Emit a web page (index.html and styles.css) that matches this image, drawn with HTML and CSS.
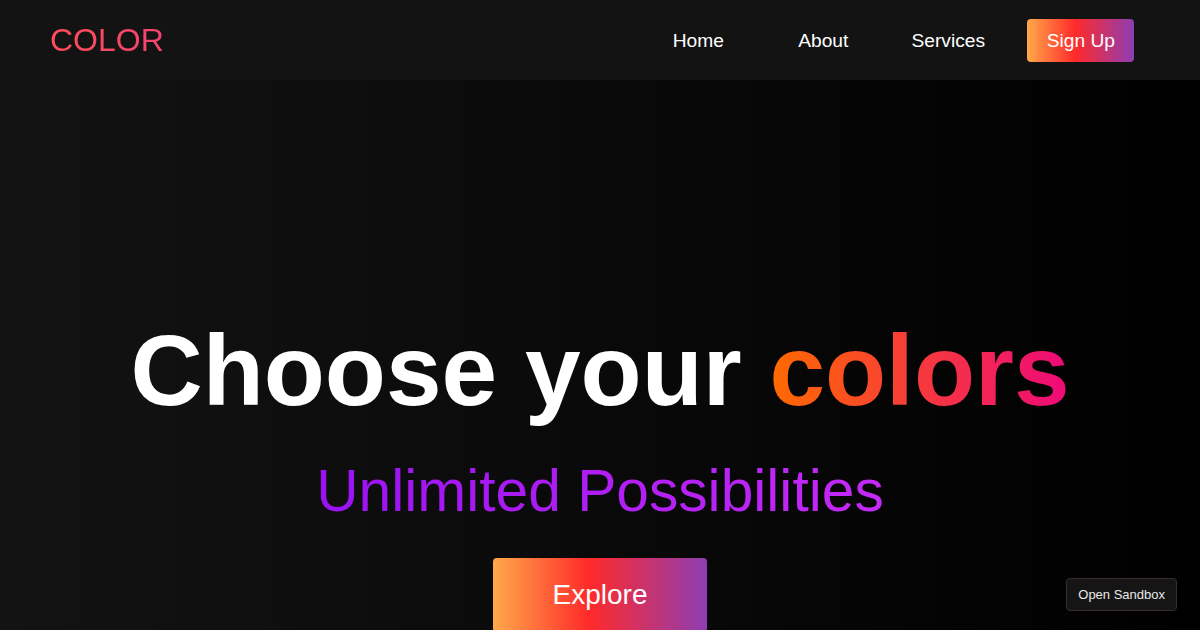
FILE: index.html
```html
<!DOCTYPE html>
<html lang="en">
<head>
  <meta charset="UTF-8">
  <meta name="viewport" content="width=device-width, initial-scale=1.0">
  <title>Color</title>
  <link rel="stylesheet" href="styles.css">
</head>
<body>

<!-- Top navigation -->
<nav class="navbar">
  <div class="logo">COLOR</div>
  <ul class="nav-links">
    <li><a href="#">Home</a></li>
    <li><a href="#">About</a></li>
    <li><a href="#">Services</a></li>
  </ul>
  <a href="#" class="btn btn-signup">Sign Up</a>
</nav>

<!-- Hero section -->
<section class="hero">
  <h1 class="hero-title">Choose your <span class="highlight">colors</span></h1>
  <p class="hero-subtitle">Unlimited Possibilities</p>
  <a href="#" class="btn btn-explore">Explore</a>
</section>

<a href="#" class="sandbox-badge">Open Sandbox</a>

</body>
</html>
```

FILE: styles.css
```css
/* Base */
* {
  box-sizing: border-box;
}

body {
  margin: 0;
  height: 100vh;
  overflow: hidden;
  font-family: "Liberation Sans", Arial, sans-serif;
  background: linear-gradient(to right, #131313, #000000);
  color: #fff;
}

a {
  color: inherit;
  text-decoration: none;
}

/* Navbar */
.navbar {
  display: flex;
  align-items: center;
  height: 80px;
  padding: 0 66px 0 50px;
  background-color: #131313;
}

.logo {
  font-size: 32px;
  background: linear-gradient(to right, #ff4d5a, #f2446f);
  -webkit-background-clip: text;
  background-clip: text;
  color: transparent;
}

.nav-links {
  display: flex;
  margin: 2px 16px 0 auto;
  padding: 0;
  list-style: none;
}

.nav-links a {
  display: block;
  width: 125px;
  text-align: center;
  font-size: 19.2px;
}

/* Gradient buttons */
.btn {
  display: inline-block;
  border-radius: 4px;
  background: linear-gradient(to right, #ffa94a, #ff2a2a 45%, #8e3db3);
  color: #fff;
}

.btn-signup {
  padding: 10px 19px 10px 20px;
  font-size: 19.2px;
  line-height: 23px;
}

/* Hero */
.hero {
  display: flex;
  flex-direction: column;
  align-items: center;
  padding-top: 230px;
  text-align: center;
}

.hero-title {
  margin: 0;
  font-size: 100px;
  line-height: 120px;
  font-weight: bold;
}

.highlight {
  background: linear-gradient(to right, #ff6a00, #ee0979);
  -webkit-background-clip: text;
  background-clip: text;
  color: transparent;
}

.hero-subtitle {
  margin: 26px 0 0;
  font-size: 58.7px;
  line-height: 70px;
  background: linear-gradient(to right, #9a12f2, #c52af6);
  -webkit-background-clip: text;
  background-clip: text;
  color: transparent;
}

.btn-explore {
  margin-top: 32px;
  padding: 20px 60px;
  font-size: 28px;
  line-height: 34px;
}

/* Sandbox badge in the corner */
.sandbox-badge {
  position: fixed;
  right: 23px;
  bottom: 19px;
  padding: 8px 11px;
  font-size: 13px;
  line-height: 15px;
  color: #e8e8e8;
  background-color: #151515;
  border: 1px solid #3a2a31;
  border-radius: 4px;
}
```
